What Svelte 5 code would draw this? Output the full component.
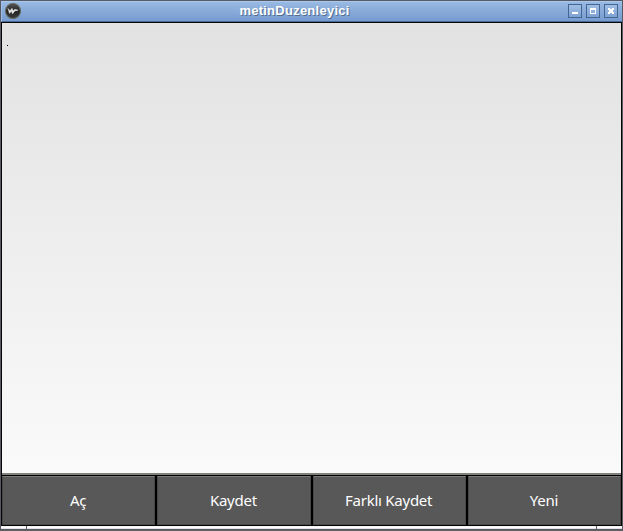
<script>
  const actions = ['Aç', 'Kaydet', 'Farklı Kaydet', 'Yeni'];
</script>

<div class="window">
  <header>
    <svg class="logo" width="18" height="18" viewBox="0 0 18 18">
      <defs>
        <linearGradient id="disc" x1="0" y1="0" x2="0" y2="1">
          <stop offset="0" stop-color="#555" />
          <stop offset="0.5" stop-color="#222" />
          <stop offset="1" stop-color="#3c3c3c" />
        </linearGradient>
      </defs>
      <circle cx="9" cy="9" r="7.5" fill="url(#disc)" stroke="#66695f" stroke-width="1.1" />
      <path d="M4 6.5l1.5 5 2-2.4 1 2.8 2.2-3 3.4-.6-2.3-.9-1.7.3-1.1 1.2-1-2.6-2 2.4z" fill="#eee" stroke="#e4e4e4" stroke-width=".5" />
    </svg>
    <h1>metinDuzenleyici</h1>
    <div class="controls">
      <button aria-label="Minimize"><svg width="12" height="12"><path d="M3 7h6v2H3z" /></svg></button>
      <button aria-label="Maximize"><svg width="12" height="12"><path fill-rule="evenodd" d="M3 3h6v6H3zM4 5v3h4V5z" /></svg></button>
      <button aria-label="Close"><svg width="12" height="12"><path d="M3 3h2v1h2V3h2v2H8v2h1v2H7V8H5v1H3V7h1V5H3z" /></svg></button>
    </div>
  </header>
  <main>
    <div class="editor"><span class="caret"></span></div>
    <nav>
      {#each actions as label}
        <button>{label}</button>
      {/each}
    </nav>
  </main>
  <footer><i></i><i class="mid"></i><i></i></footer>
</div>

<style>
  .window {
    box-sizing: border-box;
    width: 623px;
    height: 531px;
    display: flex;
    flex-direction: column;
    border: 1px solid #575965;
    border-bottom-color: #625c67;
    background: #575965;
    overflow: hidden;
  }
  header {
    box-sizing: border-box;
    height: 21px;
    flex: none;
    display: flex;
    align-items: flex-start;
    border-top: 1px solid #a9c8ee;
    border-left: 1px solid #a0c0e8;
    border-bottom: 1px solid #476a9b;
    background: linear-gradient(#99b9e2, #769bcf);
  }
  .logo { margin: 0 0 0 2px; flex: none; }
  h1 {
    flex: 1;
    margin: 0 0 0 -1px;
    text-align: center;
    color: #fff;
    font: bold 13px/18px "Liberation Sans", Arial, sans-serif;
    letter-spacing: 0.25px;
    text-shadow: 1px 1px 0 #526d92;
  }
  .controls { display: flex; gap: 4px; margin: 2px 4px 0 0; }
  .controls button {
    box-sizing: border-box;
    width: 14px;
    height: 14px;
    padding: 0;
    border: 1px solid #426592;
    background: linear-gradient(#a1bfe5, #7da1d2);
    display: flex;
  }
  .controls svg { fill: #fff; }
  main {
    height: 504px;
    flex: none;
    box-sizing: border-box;
    border: 1px solid #050505;
    display: flex;
    flex-direction: column;
    background: #000;
  }
  .editor {
    box-sizing: border-box;
    height: 452px;
    flex: none;
    padding: 22px 0 0 5px;
    border-bottom: 2px solid #80807c;
    background: linear-gradient(#e2e2e2, #fafafa);
  }
  .caret { display: block; width: 1px; height: 1px; background: #000; }
  nav { flex: 1; display: flex; gap: 2px; padding: 1px 0 0; }
  nav button {
    flex: 1 1 0;
    min-width: 0;
    box-sizing: border-box;
    padding: 0 1px 1px 0;
    border: 1px solid #484848;
    border-top-color: #7a7a78;
    background: #585858;
    color: #fff;
    font: 15px/20px "Noto Sans", "Open Sans", sans-serif;
    letter-spacing: -0.25px;
  }
  footer { flex: 1; display: flex; gap: 1px; padding-bottom: 1px; }
  footer i { width: 25px; background: linear-gradient(#eee, #fff 50%, #d5d0d5); }
  footer .mid { flex: 1; }
</style>
